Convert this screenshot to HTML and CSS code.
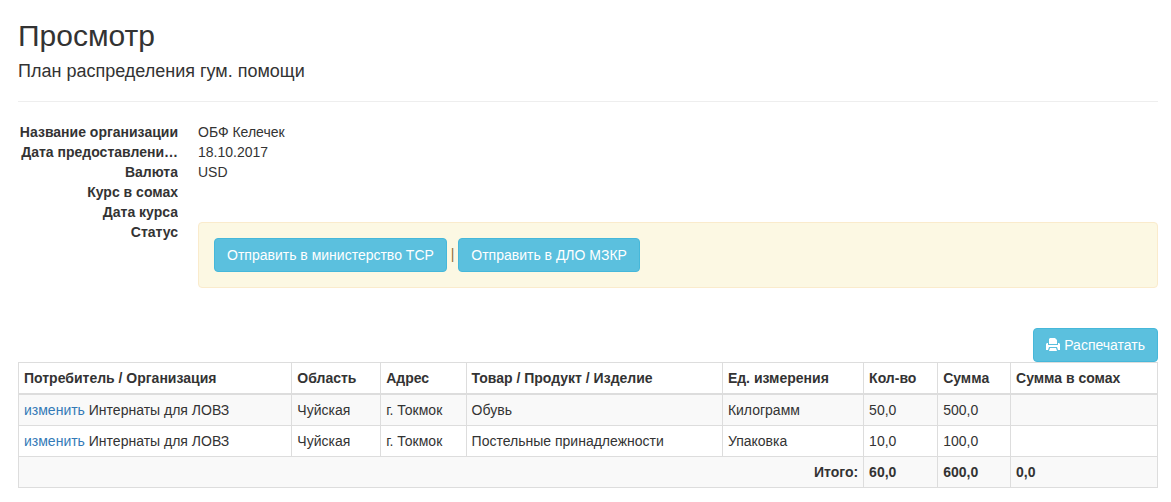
FILE: index.html
```
<!DOCTYPE html>
<html lang="ru">
<head>
<meta charset="utf-8">
<title>Просмотр</title>
<link rel="stylesheet" href="styles.css">
</head>
<body>
<main class="page">
  <h2 class="title">Просмотр</h2>
  <h4 class="subtitle">План распределения гум. помощи</h4>
  <hr class="divider">
  <dl class="details">
    <dt>Название организации</dt><dd>ОБФ Келечек</dd>
    <dt>Дата предоставлени…</dt><dd>18.10.2017</dd>
    <dt>Валюта</dt><dd>USD</dd>
    <dt>Курс в сомах</dt><dd></dd>
    <dt>Дата курса</dt><dd></dd>
    <dt>Статус</dt>
    <dd class="status">
      <button class="btn" type="button">Отправить в министерство ТСР</button>
      |
      <button class="btn" type="button">Отправить в ДЛО МЗКР</button>
    </dd>
  </dl>
  <div class="toolbar">
    <button class="btn" type="button"><svg class="icon" viewBox="0 0 14 14" aria-hidden="true"><path fill="currentColor" d="M4 0h5l2 2v4H3V1zM0 6l1-1h1v2h10V5h1l1 1v6h-2l-1-3H3l-1 3H0zM4 10h6l1 3H3z"/></svg> Распечатать</button>
  </div>
  <table class="goods">
    <colgroup><col class="c-org"><col class="c-region"><col class="c-address"><col class="c-product"><col class="c-unit"><col class="c-qty"><col class="c-sum"><col class="c-som"></colgroup>
    <thead>
      <tr><th>Потребитель / Организация</th><th>Область</th><th>Адрес</th><th>Товар / Продукт / Изделие</th><th>Ед. измерения</th><th>Кол-во</th><th>Сумма</th><th>Сумма в сомах</th></tr>
    </thead>
    <tbody>
      <tr><td><a href="#">изменить</a> Интернаты для ЛОВЗ</td><td>Чуйская</td><td>г. Токмок</td><td>Обувь</td><td>Килограмм</td><td>50,0</td><td>500,0</td><td></td></tr>
      <tr><td><a href="#">изменить</a> Интернаты для ЛОВЗ</td><td>Чуйская</td><td>г. Токмок</td><td>Постельные принадлежности</td><td>Упаковка</td><td>10,0</td><td>100,0</td><td></td></tr>
      <tr class="total"><th class="label" colspan="5" scope="row">Итого:</th><td>60,0</td><td>600,0</td><td>0,0</td></tr>
    </tbody>
  </table>
</main>
</body>
</html>
```
FILE: styles.css
```
* { box-sizing: border-box; }
body {
  margin: 0;
  background: #fff;
  color: #333;
  font: 14px/20px "Liberation Sans", Arial, sans-serif;
}
.page { padding: 19px 13px 14px 18px; }
.title { margin: 0 0 9px; font-size: 30px; line-height: 33px; font-weight: 400; }
.subtitle { margin: 0; font-size: 18px; line-height: 20px; font-weight: 400; }
.divider { margin: 20px 0; border: 0; border-top: 1px solid #eee; }
.details {
  display: grid;
  grid-template-columns: 160px 1fr;
  column-gap: 20px;
  margin: 0 0 40px;
}
.details dt {
  overflow: hidden;
  font-weight: 700;
  text-align: right;
  text-overflow: ellipsis;
  white-space: nowrap;
}
.details dd { margin: 0; min-height: 20px; }
.details .status {
  padding: 15px;
  border: 1px solid #faebcc;
  border-radius: 4px;
  background: #fcf8e3;
  color: #8a6d3b;
}
.btn {
  padding: 6px 12px;
  border: 1px solid #46b8da;
  border-radius: 4px;
  background: #5bc0de;
  color: #fff;
  font: inherit;
  vertical-align: middle;
  cursor: pointer;
}
.toolbar { display: flex; justify-content: flex-end; }
.icon { width: 14px; height: 14px; vertical-align: -2px; }
.goods { width: 100%; border-collapse: collapse; table-layout: fixed; border: 1px solid #ddd; }
.goods th, .goods td { padding: 5px; border: 1px solid #ddd; text-align: left; }
.goods thead th { border-bottom-width: 2px; }
.goods tbody tr:nth-child(odd) { background: #f9f9f9; }
.goods .total td { font-weight: 700; }
.goods .label { text-align: right; }
.goods a { color: #337ab7; text-decoration: none; }
.c-org { width: 24%; }
.c-region { width: 7.8%; }
.c-address { width: 7.5%; }
.c-product { width: 22.5%; }
.c-unit { width: 12.4%; }
.c-qty { width: 6.5%; }
.c-sum { width: 6.4%; }
```
